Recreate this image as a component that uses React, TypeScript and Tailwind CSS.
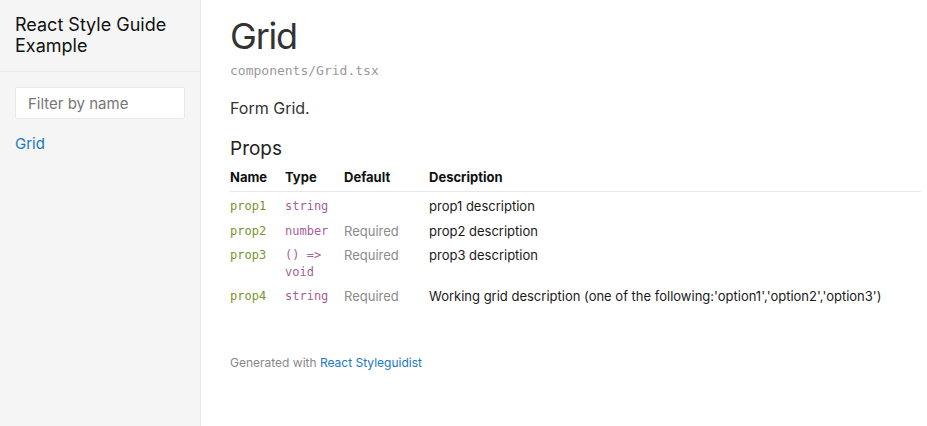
import React from 'react'

type Prop = {
  name: string
  type: string
  required: boolean
  description: string
}

const PROPS: Prop[] = [
  { name: 'prop1', type: 'string', required: false, description: 'prop1 description' },
  { name: 'prop2', type: 'number', required: true, description: 'prop2 description' },
  { name: 'prop3', type: '() => void', required: true, description: 'prop3 description' },
  {
    name: 'prop4',
    type: 'string',
    required: true,
    description: "Working grid description (one of the following:'option1','option2','option3')",
  },
]

const sans = "font-['Inter','Noto_Sans',sans-serif]"
const mono = "font-['DejaVu_Sans_Mono','Liberation_Mono',monospace]"

const App: React.FC = () => {
  return (
    <div className={`flex min-h-[426px] bg-white text-[#333] ${sans}`}>
      {/* Sidebar */}
      <aside className="w-[201px] shrink-0 bg-[#f5f5f5] border-r border-[#e8e8e8]">
        <div className="px-[15px] pt-[14px] pb-[15px] border-b border-[#e8e8e8]">
          <h1 className="text-[18px] leading-[21px] font-normal text-[#111]">React Style Guide Example</h1>
        </div>
        <div className="px-[15px] pt-[15px]">
          <input
            type="text"
            placeholder="Filter by name"
            className="w-full h-[32px] px-[12px] bg-white border border-[#e8e8e8] rounded-[2px] text-[15px] text-[#333] placeholder:text-[#767676] focus:outline-none"
          />
          <ul className="mt-[12px]">
            <li>
              <a href="#grid" className="text-[15px] leading-[22px] text-[#1978c8]">
                Grid
              </a>
            </li>
          </ul>
        </div>
      </aside>

      {/* Main content */}
      <main className="flex-1 pl-[29px] pr-[6px] pt-[15px]">
        <h2 className="text-[36px] leading-[43px] font-normal tracking-[-1.2px] text-[#333]">Grid</h2>
        <div className={`mt-[3px] text-[13px] leading-[20px] text-[#999] ${mono}`}>components/Grid.tsx</div>

        <p className="mt-[15px] text-[16px] leading-[24px] text-[#333]">Form Grid.</p>

        <h3 className="mt-[17px] text-[19px] leading-[24px] font-normal text-[#222]">Props</h3>

        <table className="mt-[8px] w-full table-fixed border-collapse text-left">
          <colgroup>
            <col className="w-[55px]" />
            <col className="w-[59px]" />
            <col className="w-[85px]" />
            <col />
          </colgroup>
          <thead>
            <tr className="border-b border-[#e8e8e8]">
              <th className="pr-[8px] pb-[6px] text-[13px] leading-[16px] font-bold text-[#111]">Name</th>
              <th className="pr-[8px] pb-[6px] text-[13px] leading-[16px] font-bold text-[#111]">Type</th>
              <th className="pr-[8px] pb-[6px] text-[13px] leading-[16px] font-bold text-[#111]">Default</th>
              <th className="pr-[8px] pb-[6px] text-[13px] leading-[16px] font-bold text-[#111]">Description</th>
            </tr>
          </thead>
          <tbody>
            {PROPS.map((prop) => (
              <tr key={prop.name} className="align-top">
                <td className={`pr-[8px] pt-[6px] pb-[2px] text-[12px] leading-[16.5px] text-[#76962c] ${mono}`}>
                  {prop.name}
                </td>
                <td className={`pr-[8px] pt-[6px] pb-[2px] text-[12px] leading-[16.5px] text-[#a7609a] ${mono}`}>
                  {prop.type}
                </td>
                <td className="pr-[8px] pt-[6px] pb-[2px] text-[13px] leading-[16.5px] text-[#8a8a8a]">
                  {prop.required ? 'Required' : ''}
                </td>
                <td className="pr-[8px] pt-[6px] pb-[2px] text-[13px] leading-[16.5px] text-[#1a1a1a]">
                  {prop.description}
                </td>
              </tr>
            ))}
          </tbody>
        </table>

        <footer className="mt-[48px] text-[12px] leading-[16px] text-[#888]">
          Generated with{' '}
          <a href="#styleguidist" className="text-[#1978c8]">
            React Styleguidist
          </a>
        </footer>
      </main>
    </div>
  )
}

export default App
